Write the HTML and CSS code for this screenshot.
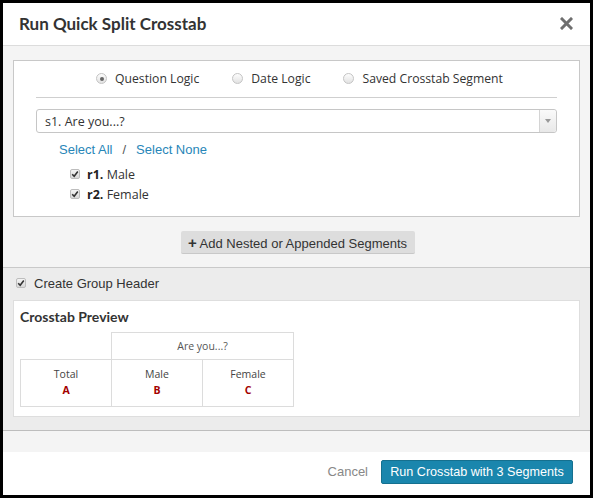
FILE: index.html
```html
<!DOCTYPE html>
<html lang="en">
<head>
    <meta charset="UTF-8">
    <title>Run Quick Split Crosstab</title>
    <link rel="stylesheet" href="styles.css">
</head>
<body>
    <div class="modal">
        <div class="modal-header">
            <h3>Run Quick Split Crosstab</h3>
            <svg class="close" width="13" height="13" viewBox="0 0 13 13">
                <path d="M2 2 L11 11 M11 2 L2 11" stroke="#6e6e6e" stroke-width="3" stroke-linecap="square"/>
            </svg>
        </div>

        <div class="segment-area">
            <div class="panel">
                <div class="logic-row">
                    <label class="radio"><span class="dot checked"></span>Question Logic</label>
                    <label class="radio"><span class="dot"></span>Date Logic</label>
                    <label class="radio"><span class="dot"></span>Saved Crosstab Segment</label>
                </div>
                <div class="divider"></div>
                <div class="select">
                    <span class="select-text">s1. Are you...?</span>
                    <span class="select-arrow"><svg width="6" height="4" viewBox="0 0 6 4"><path d="M0 0 H6 L3 4 Z" fill="#999"/></svg></span>
                </div>
                <div class="select-links">
                    <a>Select All</a><span class="slash">/</span><a>Select None</a>
                </div>
                <div class="options">
                    <label class="check"><span class="box"><svg width="8" height="8" viewBox="0 0 8 8"><path d="M1.2 4.2 L3.2 6.2 L6.8 1.6" stroke="#333" stroke-width="1.6" fill="none"/></svg></span><b>r1.</b>&nbsp;Male</label>
                    <label class="check"><span class="box"><svg width="8" height="8" viewBox="0 0 8 8"><path d="M1.2 4.2 L3.2 6.2 L6.8 1.6" stroke="#333" stroke-width="1.6" fill="none"/></svg></span><b>r2.</b>&nbsp;Female</label>
                </div>
            </div>
            <div class="add-row">
                <button class="btn-grey"><span class="plus">+</span> Add Nested or Appended Segments</button>
            </div>
        </div>

        <div class="preview-area">
            <label class="check group-header"><span class="box"><svg width="8" height="8" viewBox="0 0 8 8"><path d="M1.2 4.2 L3.2 6.2 L6.8 1.6" stroke="#333" stroke-width="1.6" fill="none"/></svg></span>Create Group Header</label>
            <div class="preview">
                <div class="preview-title">Crosstab Preview</div>
                <table class="xtab">
                    <tr class="top">
                        <td class="blank"></td>
                        <td colspan="2">Are you...?</td>
                    </tr>
                    <tr class="cols">
                        <td>Total<span class="letter">A</span></td>
                        <td>Male<span class="letter">B</span></td>
                        <td>Female<span class="letter">C</span></td>
                    </tr>
                </table>
            </div>
        </div>

        <div class="spacer"></div>

        <div class="modal-footer">
            <a class="cancel">Cancel</a>
            <button class="btn-primary">Run Crosstab with 3 Segments</button>
        </div>
    </div>
</body>
</html>
```

FILE: styles.css
```css
html, body {
    margin: 0;
    padding: 0;
    background: #000;
}
.modal {
    box-sizing: border-box;
    width: 593px;
    height: 498px;
    border: 3px solid #000;
    background: #fff;
    display: flex;
    flex-direction: column;
    font-family: "Liberation Sans", Arial, sans-serif;
    color: #333;
}
.modal-header {
    height: 42px;
    border-bottom: 1px solid #dcdcdc;
    display: flex;
    align-items: center;
    justify-content: space-between;
    padding: 0 17px 0 16px;
}
.modal-header h3 {
    margin: 0 0 2px;
    font-family: Lato, "Open Sans", sans-serif;
    font-weight: bold;
    font-size: 17px;
    color: #333;
}
.close {
    display: block;
    margin-bottom: 1px;
}
.segment-area {
    background: #f4f4f4;
    padding: 14px 10px 13px;
    border-bottom: 1px solid #c9c9c9;
}
.panel {
    background: #fff;
    border: 1px solid #c8c8c8;
    height: 155px;
    padding: 0 22px;
}
.logic-row {
    display: flex;
    justify-content: center;
    gap: 33px;
    height: 35px;
    align-items: center;
    padding-left: 6px;
    font-family: "Open Sans", sans-serif;
    font-size: 12.2px;
    color: #333;
}
.radio {
    display: flex;
    align-items: center;
}
.dot {
    width: 9px;
    height: 9px;
    border-radius: 50%;
    border: 1px solid #c4c4c4;
    background: linear-gradient(#fdfdfd, #e2e2e2);
    margin-right: 8px;
    display: flex;
    align-items: center;
    justify-content: center;
}
.dot.checked::after {
    content: "";
    width: 4px;
    height: 4px;
    border-radius: 50%;
    background: #666;
}
.divider {
    border-top: 1px solid #cfcfcf;
    margin-top: 1px;
}
.select {
    margin-top: 11px;
    height: 22px;
    border: 1px solid #c6c6c6;
    border-radius: 3px;
    display: flex;
    align-items: center;
    justify-content: space-between;
}
.select-text {
    padding-left: 8px;
    font-family: "Open Sans", sans-serif;
    font-size: 12.5px;
    color: #333;
}
.select-arrow {
    width: 16px;
    height: 22px;
    border-left: 1px solid #d4d4d4;
    background: linear-gradient(#fafafa, #e8e8e8);
    border-radius: 0 3px 3px 0;
    display: flex;
    align-items: center;
    justify-content: center;
}
.select-links {
    margin-top: 8px;
    padding-left: 23px;
    font-size: 13px;
    color: #2d86b3;
    height: 18px;
    line-height: 18px;
}
.select-links a {
    color: #2786b8;
}
.slash {
    color: #555;
    margin: 0 10px;
}
.options {
    margin-top: 7px;
    padding-left: 34px;
    display: flex;
    flex-direction: column;
    gap: 4px;
    font-family: "Open Sans", sans-serif;
    font-size: 12.5px;
}
.check {
    display: flex;
    align-items: center;
    height: 16px;
}
.check b {
    color: #222;
}
.box {
    width: 8px;
    height: 8px;
    border: 1px solid #bdbdbd;
    border-radius: 2px;
    background: linear-gradient(#f4f4f4, #d8d8d8);
    margin-right: 7px;
    display: flex;
    align-items: center;
    justify-content: center;
}
.box svg {
    display: block;
}
.add-row {
    display: flex;
    justify-content: center;
    margin-top: 14px;
}
.btn-grey {
    width: 234px;
    height: 23px;
    background: #dddddd;
    border: none;
    border-bottom: 1px solid #c8c8c8;
    border-radius: 2px;
    font-family: "Liberation Sans", Arial, sans-serif;
    font-size: 13px;
    color: #333;
    padding: 0;
    margin-left: 2px;
}
.plus {
    font-weight: bold;
    font-size: 15px;
}
.preview-area {
    background: #ececec;
    padding: 7px 10px 13px;
    border-bottom: 1px solid #bdbdbd;
}
.group-header {
    padding-left: 3px;
    font-size: 13px;
    color: #333;
    height: 16px;
    margin-bottom: 9px;
}
.group-header .box {
    margin-right: 8px;
}
.preview {
    background: #fff;
    border: 1px solid #dedede;
    height: 115px;
    padding: 0 6px;
}
.preview-title {
    font-family: Lato, "Open Sans", sans-serif;
    font-weight: bold;
    font-size: 14px;
    color: #333;
    height: 31px;
    line-height: 31px;
}
.xtab {
    border-collapse: collapse;
    font-family: "Open Sans", sans-serif;
    font-size: 10.5px;
    color: #555;
}
.xtab td {
    border: 1px solid #dcdcdc;
    width: 90px;
    text-align: center;
    padding: 0;
}
.xtab td.blank {
    border: none;
    border-bottom: 1px solid #dcdcdc;
}
.xtab tr.top td {
    height: 26px;
}
.xtab tr.cols td {
    height: 44px;
    line-height: 16px;
    vertical-align: middle;
    padding-bottom: 2px;
    color: #444;
}
.letter {
    display: block;
    font-weight: bold;
    color: #a30000;
}
.spacer {
    background: #f4f4f4;
    height: 21px;
}
.modal-footer {
    flex: 1;
    display: flex;
    justify-content: flex-end;
    align-items: center;
    padding: 0 17px 4px 0;
    gap: 13px;
}
.cancel {
    font-size: 13px;
    color: #888;
}
.btn-primary {
    height: 24px;
    width: 192px;
    background: #1a86ad;
    border: 1px solid #15708f;
    border-radius: 2px;
    color: #fff;
    font-family: "Liberation Sans", Arial, sans-serif;
    font-size: 12.6px;
    padding: 0;
}
```
